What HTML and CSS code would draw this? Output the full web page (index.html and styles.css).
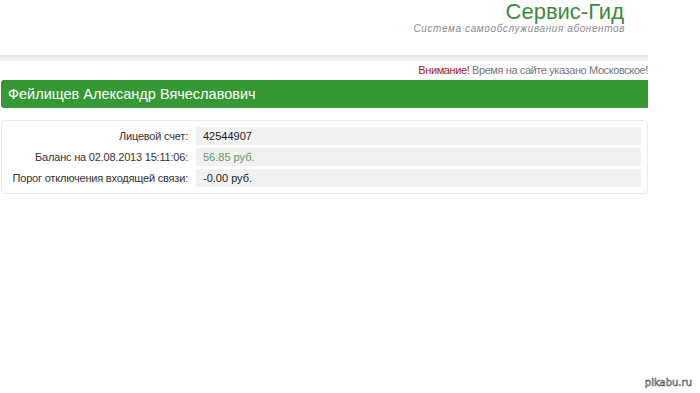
FILE: index.html
```html
<!DOCTYPE html>
<html lang="ru">
<head>
  <meta charset="UTF-8">
  <title>Сервис-Гид</title>
  <link rel="stylesheet" href="styles.css">
</head>
<body>
<div id="page">
  <div class="header">
    <div class="logo-title">Сервис-Гид</div>
    <div class="logo-sub">Система самообслуживания абонентов</div>
  </div>

  <div class="top-line"></div>

  <div class="notice">
    <span class="notice-warn">Внимание!</span> Время на сайте указано Московское!
  </div>

  <div class="client-name">Фейлищев Александр Вячеславович</div>

  <div class="info-box">
    <table class="info-table">
      <tr>
        <td class="label">Лицевой счет:</td>
        <td class="value">42544907</td>
      </tr>
      <tr>
        <td class="label">Баланс на 02.08.2013 15:11:06:</td>
        <td class="value positive">56.85 руб.</td>
      </tr>
      <tr>
        <td class="label">Порог отключения входящей связи:</td>
        <td class="value">-0.00 руб.</td>
      </tr>
    </table>
  </div>
</div>
<div class="watermark">pikabu.ru</div>
</body>
</html>
```

FILE: styles.css
```css
body {
  font-family: "Liberation Sans", Arial, sans-serif;
  margin: 0;
  padding: 0;
  background-color: white;
  color: #333;
}

#page {
  width: 648px;
}

.header {
  text-align: right;
  padding-right: 24px;
  height: 54px;
}

.logo-title {
  font-size: 22px;
  line-height: 22px;
  margin-top: 1px;
  color: #3d8b3d;
}

.logo-sub {
  font-size: 10px;
  line-height: 11px;
  font-style: italic;
  letter-spacing: 0.6px;
  color: #8a8a8a;
  margin-right: -1px;
}

.top-line {
  height: 6px;
  background: linear-gradient(#e6e6e6, #f6f6f6);
}

.notice {
  text-align: right;
  font-size: 11px;
  letter-spacing: -0.4px;
  line-height: 14px;
  padding-top: 2px;
  height: 17px;
  color: #777;
}

.notice-warn {
  color: #a01c1c;
}

.client-name {
  margin: 0 0 0 1px;
  height: 28px;
  line-height: 28px;
  padding-left: 7px;
  font-size: 14.5px;
  color: white;
  background-color: #349834;
  border-radius: 3px 0 0 3px;
}

.info-box {
  margin-top: 12px;
  margin-left: 1px;
  border: 1px solid #ebebeb;
  border-radius: 4px;
  padding: 3px 6px 5px 0;
  height: 64px;
}

.info-table {
  width: 100%;
  border-collapse: separate;
  border-spacing: 0 3px;
  font-size: 11px;
}

.info-table td {
  height: 18px;
  padding: 0;
}

.label {
  width: 186px;
  text-align: right;
  padding-right: 8px !important;
  letter-spacing: -0.2px;
  color: #333;
}

.value {
  background-color: #f1f1f1;
  padding-left: 7px !important;
  color: #222;
}

.positive {
  color: #5b9a4b;
}

.watermark {
  position: absolute;
  right: 8px;
  bottom: 5px;
  font-family: "DejaVu Sans", sans-serif;
  font-size: 10px;
  color: white;
  -webkit-text-stroke: 0.6px #555;
}
```
